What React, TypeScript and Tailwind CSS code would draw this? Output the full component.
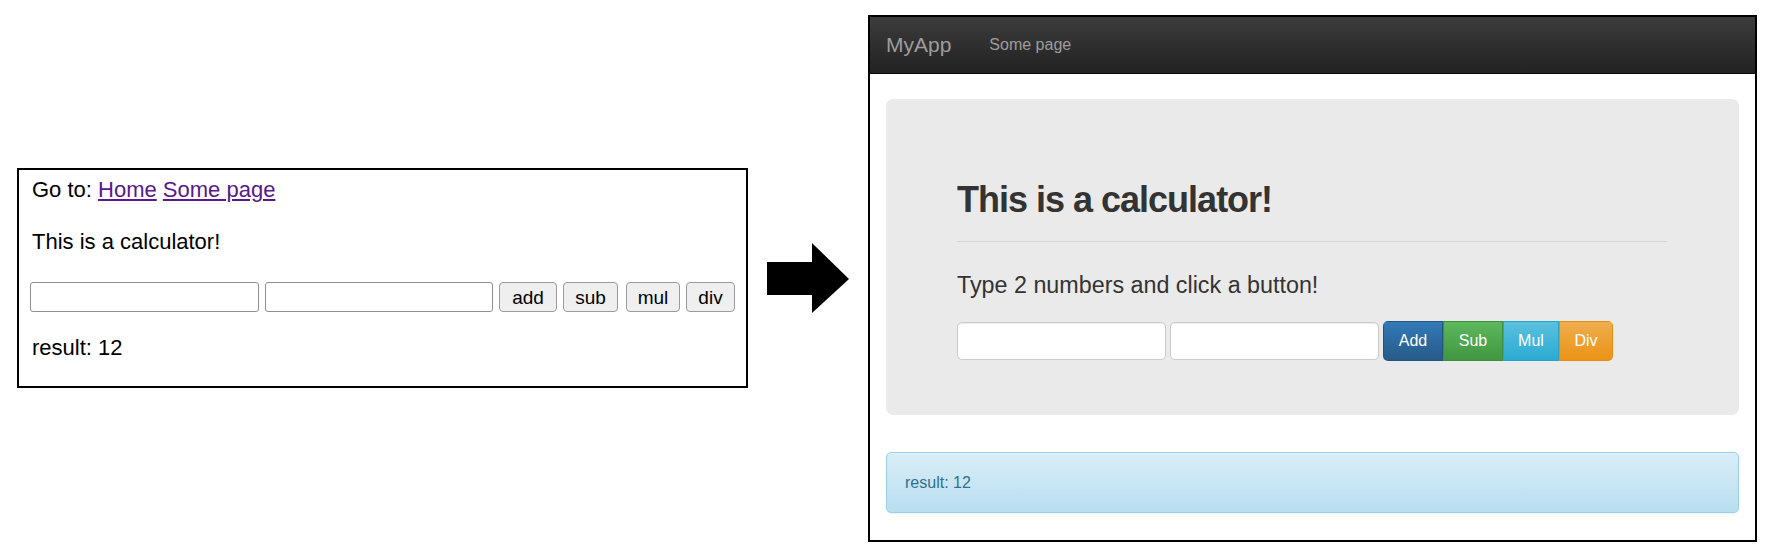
import React from "react";

const sans = { fontFamily: '"Liberation Sans", Arial, sans-serif' };

function LeftBox() {
  return (
    <div
      className="mt-[168px] w-[731px] h-[220px] shrink-0 border-2 border-black bg-white pl-[11px] pt-[8px] text-[22px] leading-[24px] text-black"
      style={sans}
    >
      <div className="pl-[2px]">
        Go to:{" "}
        <a href="#" className="text-[#551a8b] underline">
          Home
        </a>{" "}
        <a href="#" className="text-[#551a8b] underline">
          Some page
        </a>
      </div>
      <div className="mt-[28px] pl-[2px]">This is a calculator!</div>
      <div className="mt-[28px] flex items-center gap-[6px]">
        <input className="h-[30px] w-[229px] rounded-[3px] border border-[#8f8f8f] bg-white" />
        <input className="h-[30px] w-[228px] rounded-[3px] border border-[#8f8f8f] bg-white" />
        <button className="h-[30px] w-[58px] rounded-[4px] border border-[#9a9a9a] bg-[#efefef] text-[19px] leading-none text-black">add</button>
        <button className="h-[30px] w-[55px] rounded-[4px] border border-[#9a9a9a] bg-[#efefef] text-[19px] leading-none text-black">sub</button>
        <button className="ml-[2px] h-[30px] w-[54px] rounded-[4px] border border-[#9a9a9a] bg-[#efefef] text-[19px] leading-none text-black">mul</button>
        <button className="h-[30px] w-[49px] rounded-[4px] border border-[#9a9a9a] bg-[#efefef] text-[19px] leading-none text-black">div</button>
      </div>
      <div className="mt-[24px] pl-[2px]">result: 12</div>
    </div>
  );
}

function Arrow() {
  return (
    <div className="mt-[243px] ml-[19px] mr-[19px] shrink-0">
      <svg width="82" height="70" viewBox="0 0 82 70">
        <polygon points="0,19 45,19 45,0 82,36 45,70 45,52 0,52" fill="#000" />
      </svg>
    </div>
  );
}

function RightFrame() {
  return (
    <div className="mt-[15px] w-[889px] h-[527px] shrink-0 border-2 border-black bg-white" style={sans}>
      <div className="flex h-[57px] items-center border-b border-[#080808] bg-[linear-gradient(to_bottom,#3c3c3c,#222222)] pl-[16px]">
        <span className="text-[21px] text-[#9d9d9d]">MyApp</span>
        <span className="ml-[38px] text-[16px] text-[#9d9d9d]">Some page</span>
      </div>
      <div className="px-[16px]">
        <div className="mt-[25px] h-[316px] rounded-[7px] bg-[#eaeaea] pl-[71px] pr-[72px] pt-[81px]">
          <h1 className="text-[36px] font-bold leading-[40px] tracking-[-1px] text-[#333333]">
            This is a calculator!
          </h1>
          <div className="mt-[21px] h-px bg-[#d4d4d4]" />
          <p className="mt-[27px] text-[23.3px] leading-[32px] text-[#333333]">
            Type 2 numbers and click a button!
          </p>
          <div className="mt-[20px] flex items-center">
            <input className="h-[38px] w-[209px] rounded-[5px] border border-[#cccccc] bg-white shadow-[inset_0_1px_1px_rgba(0,0,0,0.075)]" />
            <input className="ml-[4px] h-[38px] w-[209px] rounded-[5px] border border-[#cccccc] bg-white shadow-[inset_0_1px_1px_rgba(0,0,0,0.075)]" />
            <div className="ml-[4px] flex h-[40px] overflow-hidden rounded-[5px] text-[16px] text-white [text-shadow:0_-1px_0_rgba(0,0,0,0.2)]">
              <button className="w-[60px] border border-[#245580] bg-[linear-gradient(to_bottom,#337ab7,#265a88)]">Add</button>
              <button className="w-[60px] border border-[#3e8f3e] bg-[linear-gradient(to_bottom,#5cb85c,#419641)]">Sub</button>
              <button className="w-[56px] border border-[#28a4c9] bg-[linear-gradient(to_bottom,#5bc0de,#2aabd2)]">Mul</button>
              <button className="w-[54px] border border-[#e38d13] bg-[linear-gradient(to_bottom,#f0ad4e,#eb9316)]">Div</button>
            </div>
          </div>
        </div>
        <div className="mt-[37px] flex h-[61px] items-center rounded-[5px] border border-[#9acfea] bg-[linear-gradient(to_bottom,#d9edf7,#b9def0)] pl-[18px] text-[16px] text-[#31708f] shadow-[inset_0_1px_0_rgba(255,255,255,0.25),0_1px_2px_rgba(0,0,0,0.05)]">
          result: 12
        </div>
      </div>
    </div>
  );
}

export default function App() {
  return (
    <div className="flex h-[553px] w-[1769px] items-start bg-white pl-[17px]">
      <LeftBox />
      <Arrow />
      <RightFrame />
    </div>
  );
}
